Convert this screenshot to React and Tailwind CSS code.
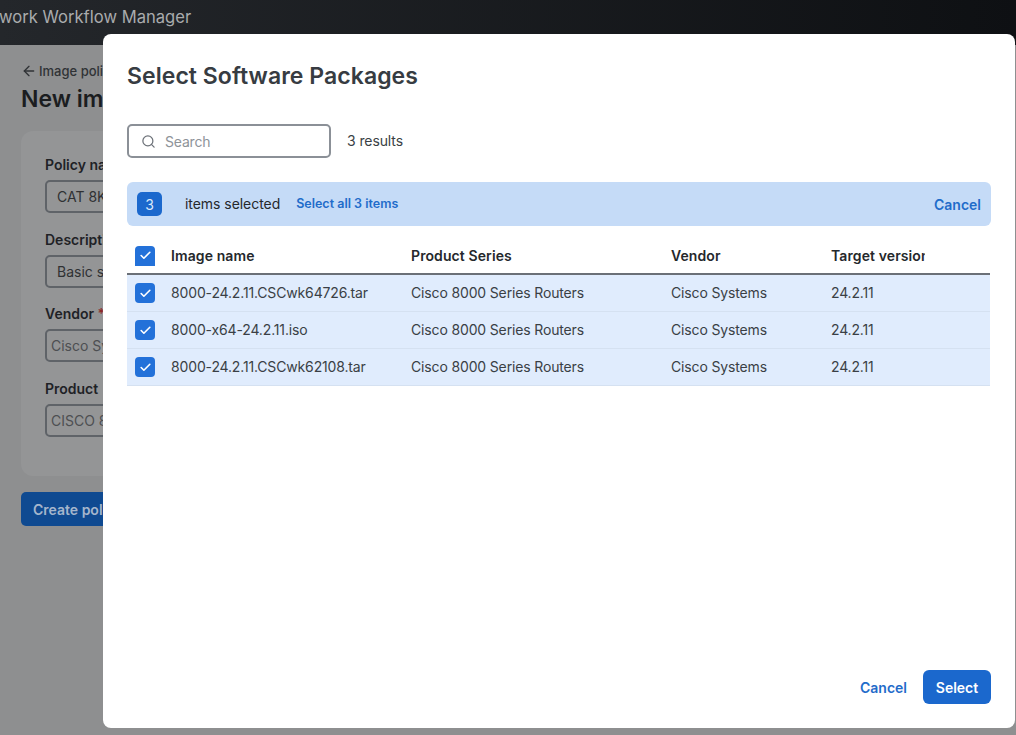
import { Check, Search, ArrowLeft } from 'lucide-react';

const rows = [
  { name: '8000-24.2.11.CSCwk64726.tar' },
  { name: '8000-x64-24.2.11.iso' },
  { name: '8000-24.2.11.CSCwk62108.tar' },
];

function Checkbox({ clipped }) {
  return (
    <div
      className={
        'flex w-5 h-5 items-center justify-center bg-[#2371d9] text-white ' +
        (clipped ? 'rounded-t-[4px]' : 'rounded-[4px]')
      }
    >
      <Check size={13} strokeWidth={3} />
    </div>
  );
}

function Field({ label, required, value, muted }) {
  return (
    <div className="mb-[17.7px]">
      <div className="h-[18px] text-[14px] leading-[18px] font-semibold text-[#1f2226] whitespace-nowrap">
        {label}
        {required && <span className="text-[#8c2a2a]"> *</span>}
      </div>
      <div
        className={
          'mt-[6px] flex h-[33px] w-[300px] items-center rounded-[5px] border-2 border-[#5f6368] ' +
          (muted ? 'pl-[4px] text-[#4d4f52]' : 'pl-[10px] text-[#2f3133]')
        }
      >
        <span className="text-[14px] whitespace-nowrap">{value}</span>
      </div>
    </div>
  );
}

function BackgroundPage() {
  return (
    <div className="h-[735px] w-[1016px] overflow-hidden bg-[#8e8f90]">
      <div className="flex h-[45px] items-center bg-gradient-to-r from-[#24272b] to-[#0e1013] pb-[11px]">
        <span className="ml-[-1px] text-[16.6px] text-[#a9abad] whitespace-nowrap">work Workflow Manager</span>
      </div>
      <div className="pl-[21px] pt-[17px]">
        <div className="flex items-center gap-[2px] text-[13px] font-medium leading-[18px] text-[#303336]">
          <ArrowLeft size={16} />
          <span>Image policies</span>
        </div>
        <div className="mt-[4px] text-[23px] font-semibold leading-[30px] text-[#1b1d20] whitespace-nowrap">
          New image policy
        </div>
        <div className="mt-[17px] h-[345px] w-[400px] rounded-[12px] bg-[#949596] pl-[24px] pt-[25px]">
          <Field label="Policy name" value="CAT 8K" />
          <Field label="Description" value="Basic set" />
          <Field label="Vendor" required value="Cisco Systems" muted />
          <Field label="Product" value="CISCO 8000" muted />
        </div>
        <div className="mt-[16px] flex h-[34px] w-[140px] items-center rounded-[5px] bg-[#0f4a91] pl-[12px] text-[14px] font-semibold text-[#a5b6cc]">
          Create policy
        </div>
      </div>
    </div>
  );
}

function TableRow({ name }) {
  return (
    <div className="grid h-[37px] grid-cols-[44px_232px_260px_160px_102px] items-center bg-[#e0ecfd] border-b border-[#d5e1f1] text-[14px] tracking-[-0.15px] text-[#3a3f45]">
      <div className="pl-2">
        <Checkbox />
      </div>
      <div className="whitespace-nowrap pb-[2px]">{name}</div>
      <div className="pl-2 whitespace-nowrap pb-[2px]">Cisco 8000 Series Routers</div>
      <div className="pl-2 whitespace-nowrap pb-[2px]">Cisco Systems</div>
      <div className="pl-2 whitespace-nowrap pb-[2px]">24.2.11</div>
    </div>
  );
}

export default function App() {
  return (
    <div className="relative h-[735px] w-[1016px] overflow-hidden font-['Inter',sans-serif]">
      <BackgroundPage />

      <div className="absolute left-[103px] top-[34px] flex h-[694px] w-[912px] flex-col rounded-[8px] bg-white pl-[24px] pr-[24px] pt-[26px] pb-[24px]">
        <h1 className="text-[23px] font-semibold leading-[32px] tracking-[0.05px] text-[#373c42]">Select Software Packages</h1>

        <div className="mt-[32px] flex items-center">
          <div className="flex h-[34px] w-[204px] items-center rounded-[5px] border-2 border-[#8b9097] pl-[12px]">
            <Search size={15} className="text-[#6d7279]" />
            <span className="ml-[9px] text-[14px] tracking-[-0.2px] text-[#8e9399]">Search</span>
          </div>
          <span className="ml-[16px] pb-[2px] text-[14px] tracking-[-0.1px] text-[#3a3f45]">3 results</span>
        </div>

        <div className="mt-[24px] flex h-[44px] items-center rounded-[6px] bg-[#c5dbf7] pl-[10px] pr-[10px]">
          <div className="flex h-6 w-[25px] items-center justify-center rounded-[5px] bg-[#1b68cd] text-[14px] text-[#dbe8fa]">3</div>
          <span className="ml-[23px] pb-[2px] text-[14px] tracking-[-0.05px] text-[#25282c]">items selected</span>
          <button className="ml-[16px] text-[12.5px] font-semibold text-[#1f6cca]">Select all 3 items</button>
          <button className="ml-auto text-[14px] font-semibold text-[#1f6cca]">Cancel</button>
        </div>

        <div className="mt-[12px] mr-px">
          <div className="grid h-[37px] grid-cols-[44px_232px_260px_160px_102px] items-center border-b-2 border-[#6b7077] text-[14px] font-semibold tracking-[0.1px] text-[#25282c]">
            <div className="pl-2">
              <Checkbox clipped />
            </div>
            <div className="whitespace-nowrap">Image name</div>
            <div className="pl-2 whitespace-nowrap">Product Series</div>
            <div className="pl-2 whitespace-nowrap">Vendor</div>
            <div className="overflow-hidden pl-2 whitespace-nowrap">Target version</div>
          </div>
          {rows.map((r) => (
            <TableRow key={r.name} name={r.name} />
          ))}
        </div>

        <div className="mt-auto flex items-center justify-end">
          <button className="text-[14px] font-semibold text-[#1f6cca]">Cancel</button>
          <button className="ml-[16px] h-[34px] w-[68px] rounded-[6px] bg-[#1b68cd] text-[14px] font-semibold text-white">Select</button>
        </div>
      </div>
    </div>
  );
}
